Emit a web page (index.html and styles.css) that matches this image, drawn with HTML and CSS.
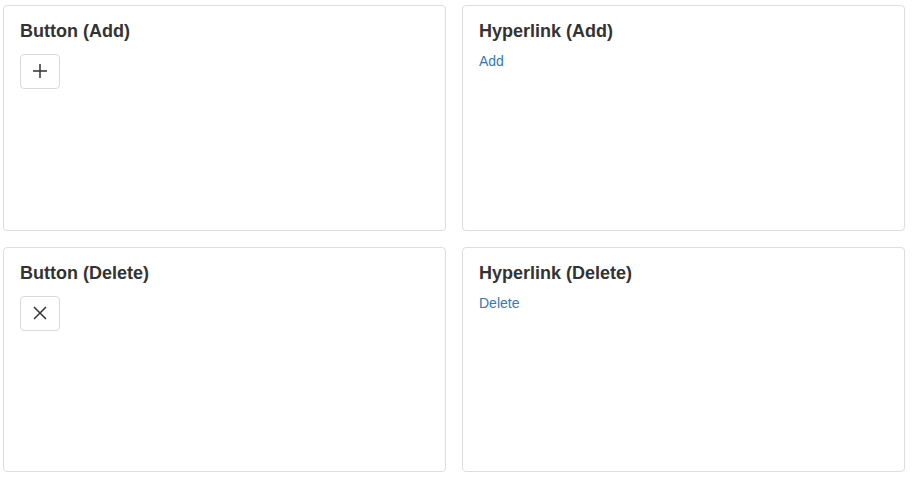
FILE: index.html
```html
<!DOCTYPE html>
<html>
<head>
<meta charset="utf-8">
<link rel="stylesheet" href="styles.css">
</head>
<body>
<div class="grid">
  <div class="card">
    <h4 class="title">Button (Add)</h4>
    <button class="icon-btn" type="button" aria-label="Add">
      <svg width="16" height="16" viewBox="0 0 16 16"><path d="M8 1v14M1 8h14" stroke="#333" stroke-width="1.5" fill="none"/></svg>
    </button>
  </div>
  <div class="card">
    <h4 class="title">Hyperlink (Add)</h4>
    <a class="link" href="#">Add</a>
  </div>
  <div class="card">
    <h4 class="title">Button (Delete)</h4>
    <button class="icon-btn" type="button" aria-label="Delete">
      <svg width="16" height="16" viewBox="0 0 16 16"><path d="M2 2l12 12M14 2l-12 12" stroke="#333" stroke-width="1.5" fill="none"/></svg>
    </button>
  </div>
  <div class="card">
    <h4 class="title">Hyperlink (Delete)</h4>
    <a class="link" href="#">Delete</a>
  </div>
</div>
</body>
</html>
```
FILE: styles.css
```css
html, body {
  margin: 0;
  padding: 0;
  background: #fff;
}
body {
  font-family: "Liberation Sans", Arial, sans-serif;
  font-size: 14px;
  line-height: 20px;
  color: #333;
}
.grid {
  display: grid;
  grid-template-columns: 443px 443px;
  grid-template-rows: 226px 225px;
  column-gap: 16px;
  row-gap: 16px;
  padding: 5px 0 0 3px;
}
.card {
  box-sizing: border-box;
  border: 1px solid #ddd;
  border-radius: 4px;
  padding: 16px 16px 15px;
  display: flex;
  flex-direction: column;
  align-items: flex-start;
}
.title {
  margin: 0 0 9px 0;
  font-size: 18px;
  line-height: 19.8px;
  font-weight: bold;
  color: #333;
}
.icon-btn {
  box-sizing: border-box;
  width: 40px;
  height: 35px;
  margin-top: 3px;
  padding: 0;
  border: 1px solid #d9d9d9;
  border-radius: 4px;
  background: #fff;
  display: flex;
  align-items: center;
  justify-content: center;
}
.icon-btn svg {
  display: block;
}
.link {
  color: #337ab7;
  text-decoration: none;
  font-size: 14px;
  line-height: 20px;
}
```
